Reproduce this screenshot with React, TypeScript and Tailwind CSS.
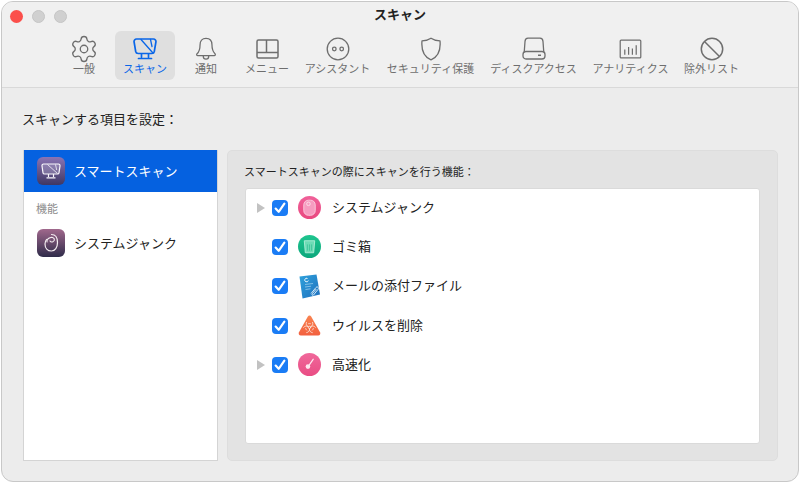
import React from "react";
import { Biohazard, Settings } from "lucide-react";

const FONT = "font-['Inter','Noto_Sans_CJK_JP',sans-serif]";

const Gear = () => <Settings size={30} strokeWidth={1.05} />;
const Monitor = () => (
  <svg width="24" height="22" viewBox="0 0 24 22" fill="none" stroke="currentColor" strokeWidth="1.7" strokeLinejoin="round" strokeLinecap="round">
    <path d="M3.500 1h17a2.500 2.500 0 0 1 2.400 3l-1.600 9.500a2.500 2.500 0 0 1-2.400 2H5.100a2.500 2.500 0 0 1-2.400-2L1.100 4a2.500 2.500 0 0 1 2.400-3z" />
    <path d="M8 1.500 19.500 14.500" strokeWidth="1.300" />
    <path d="M17.500 1.500l1.500 7" strokeWidth="1.300" />
    <path d="M8.500 16v3M15.500 16v3M5.500 20.500h13" />
  </svg>
);
const Bell = () => (
  <svg width="22" height="24" viewBox="0 0 24 26" fill="none" stroke="currentColor" strokeWidth="1.400" strokeLinejoin="round">
    <path d="M12 1.500c-4.200 0-6.500 3-6.500 7 0 5-1 7.500-3.300 9.700-.8.800-.3 2 .8 2h18c1.100 0 1.600-1.200.8-2-2.300-2.200-3.300-4.700-3.300-9.700 0-4-2.300-7-6.500-7z" />
    <path d="M9 20.500c0 2.200 1.300 3.500 3 3.500s3-1.300 3-3.500" />
  </svg>
);
const Menu = () => (
  <svg width="23" height="20" viewBox="0 0 23 20" fill="none" stroke="currentColor" strokeWidth="1.500">
    <rect x="1" y="1" width="21" height="18" rx="1.500" />
    <path d="M1 13.500h21M10.500 1v12.500" />
  </svg>
);
const Assistant = () => (
  <svg width="24" height="24" viewBox="0 0 24 24" fill="none" stroke="currentColor" strokeWidth="1.300">
    <circle cx="12" cy="12" r="10.800" />
    <circle cx="8.300" cy="12" r="1.800" />
    <circle cx="15.700" cy="12" r="1.800" />
  </svg>
);
const Shield = () => (
  <svg width="22" height="24" viewBox="0 0 22 24" fill="none" stroke="currentColor" strokeWidth="1.300" strokeLinejoin="round">
    <path d="M11 1.200c2.500 1.800 5.500 2.600 9 2.600.8 8.500-.8 15.600-9 19-8.200-3.400-9.800-10.500-9-19 3.500 0 6.500-.8 9-2.600z" />
  </svg>
);
const Disk = () => (
  <svg width="24" height="23" viewBox="0 0 24 23" fill="none" stroke="currentColor" strokeWidth="1.300">
    <path d="M2.200 15.500 3 4.500C3.100 2.600 4.200 1.200 6 1.200h12c1.800 0 2.900 1.400 3 3.300l.8 11" />
    <rect x="1" y="14.500" width="22" height="7.500" rx="3" />
    <path d="M16 18.300h3" strokeWidth="1.500" />
  </svg>
);
const Chart = () => (
  <svg width="23" height="20" viewBox="0 0 24 21" fill="none" stroke="currentColor" strokeWidth="1.300">
    <rect x="1.200" y="1.200" width="21.600" height="18.600" rx="1" />
    <path d="M6 11v5.500M10 8.500v8M14 10v6.500M18 6.500v10" />
  </svg>
);
const Ban = () => (
  <svg width="24" height="24" viewBox="0 0 24 24" fill="none" stroke="currentColor" strokeWidth="1.500">
    <circle cx="12" cy="12" r="10.700" />
    <path d="M4.500 4.500l15 15" />
  </svg>
);

const tabs = [
  { label: "一般", icon: <Gear />, cls: "w-[60px] text-[#6e6e6e]" },
  { label: "スキャン", icon: <Monitor />, cls: "w-[60px] ml-px bg-[#dfdfdf] text-[#0a66e8]" },
  { label: "通知", icon: <Bell />, cls: "w-[60px] ml-px text-[#6e6e6e]" },
  { label: "メニュー", icon: <Menu />, cls: "w-[60px] ml-px text-[#6e6e6e]" },
  { label: "アシスタント", icon: <Assistant />, cls: "w-[80px] ml-[0.5px] text-[#6e6e6e]" },
  { label: "セキュリティ保護", icon: <Shield />, cls: "w-[106px] text-[#6e6e6e]" },
  { label: "ディスクアクセス", icon: <Disk />, cls: "w-[100px] text-[#6e6e6e]" },
  { label: "アナリティクス", icon: <Chart />, cls: "w-[94px] text-[#6e6e6e]" },
  { label: "除外リスト", icon: <Ban />, cls: "w-[68px] text-[#6e6e6e]" },
];

const Check = () => (
  <span className="w-4 h-4 rounded-[4px] bg-[#1a7cf5] flex items-center justify-center shrink-0">
    <svg width="12" height="12" viewBox="0 0 11 11" fill="none" stroke="#fff" strokeWidth="2" strokeLinecap="round" strokeLinejoin="round">
      <path d="M1.500 6l2.800 3L9.500 1.500" />
    </svg>
  </span>
);

const JunkIcon = () => (
  <svg width="23" height="23" viewBox="0 0 22 22">
    <defs><linearGradient id="p1" x1="0" y1="0" x2="0" y2="1"><stop offset="0" stopColor="#f0619a" /><stop offset="1" stopColor="#e9487f" /></linearGradient></defs>
    <circle cx="11" cy="11" r="11" fill="url(#p1)" />
    <rect x="5.500" y="4" width="11" height="14.500" rx="4.500" fill="#f69cc0" stroke="#fbd3e2" strokeWidth="0.800" />
    <circle cx="10" cy="7.500" r="1.700" fill="none" stroke="#fde3ec" strokeWidth="0.800" />
  </svg>
);
const TrashIcon = () => (
  <svg width="23" height="23" viewBox="0 0 22 22">
    <defs><linearGradient id="g1" x1="0" y1="0" x2="0" y2="1"><stop offset="0" stopColor="#1fc58f" /><stop offset="1" stopColor="#0ba77c" /></linearGradient></defs>
    <circle cx="11" cy="11" r="11" fill="url(#g1)" />
    <path d="M6 5.500h10l-1 11.500H7z" fill="#6ddcb6" stroke="#b8f0dc" strokeWidth="0.800" strokeLinejoin="round" />
    <path d="M9 9v6M11 9v6M13 9v6" stroke="#2cb98f" strokeWidth="0.600" />
  </svg>
);
const MailIcon = () => (
  <svg width="22" height="25" viewBox="0 0 22 25">
    <defs><linearGradient id="b1" x1="0" y1="0" x2="1" y2="1"><stop offset="0" stopColor="#2fa2dc" /><stop offset="1" stopColor="#1f6fbd" /></linearGradient></defs>
    <path d="M0.500 2.500 17.500 0.500 21 20.500 3.500 24.500z" fill="url(#b1)" />
    <path d="M6 10.500l8-1M6 13l6-.8M6.500 15.500l5-.7" stroke="#a9d5f0" strokeWidth="0.700" />
    <path d="M8.500 4.500a1.800 1.800 0 1 0 .8 2" fill="none" stroke="#eaf6fc" strokeWidth="1" />
    <path d="M12 19.500l5-6c1.300-1.500 3.300.2 2.100 1.800l-4.600 5.700c-.9 1-2.100 0-1.200-1.200l4-4.800" fill="none" stroke="#e4f2fb" strokeWidth="0.900" />
  </svg>
);
const VirusIcon = () => (
  <svg width="23" height="21" viewBox="0 0 23 21">
    <defs><linearGradient id="o1" x1="0" y1="0" x2="0" y2="1"><stop offset="0" stopColor="#f98350" /><stop offset="1" stopColor="#f2603f" /></linearGradient></defs>
    <path d="M11.500 .5c.8 0 1.300.4 1.800 1.200l8.700 15.500c.8 1.500-.1 3.300-1.800 3.300H2.800c-1.700 0-2.600-1.800-1.800-3.300L9.700 1.700c.5-.8 1-1.200 1.800-1.200z" fill="url(#o1)" />
    <Biohazard x={4.500} y={5.500} width={14} height={14} stroke="#fde8de" strokeWidth={1.500} />
  </svg>
);
const SpeedIcon = () => (
  <svg width="23" height="23" viewBox="0 0 22 22">
    <defs><linearGradient id="p2" x1="0" y1="0" x2="0" y2="1"><stop offset="0" stopColor="#f0689b" /><stop offset="1" stopColor="#e94d84" /></linearGradient></defs>
    <circle cx="11" cy="11" r="11" fill="url(#p2)" />
    <circle cx="9.500" cy="13" r="2.200" fill="#fde6ef" />
    <path d="M10 12.500 14.500 6" stroke="#fde6ef" strokeWidth="1.200" strokeLinecap="round" />
  </svg>
);

const rows = [
  { label: "システムジャンク", icon: <JunkIcon />, arrow: true },
  { label: "ゴミ箱", icon: <TrashIcon />, arrow: false },
  { label: "メールの添付ファイル", icon: <MailIcon />, arrow: false },
  { label: "ウイルスを削除", icon: <VirusIcon />, arrow: false },
  { label: "高速化", icon: <SpeedIcon />, arrow: true },
];

const SmartTile = () => (
  <svg width="28" height="28" viewBox="0 0 28 28">
    <defs><linearGradient id="s1" x1="0" y1="0" x2="0" y2="1"><stop offset="0" stopColor="#8a74b4" /><stop offset="1" stopColor="#3f3763" /></linearGradient></defs>
    <rect width="28" height="28" rx="6" fill="url(#s1)" />
    <path d="M6.500 7h15a1.500 1.500 0 0 1 1.500 1.800l-1 7a1.500 1.500 0 0 1-1.500 1.200h-13a1.500 1.500 0 0 1-1.500-1.200l-1-7a1.500 1.500 0 0 1 1.500-1.800z" fill="#f2eff8" fillOpacity="0.2" stroke="#f7f5fb" strokeWidth="1.200" />
    <path d="M10.500 7.500 20.500 16.500M18.500 7.500l1.200 5.500" fill="none" stroke="#f7f5fb" strokeWidth="0.800" />
    <path d="M11.500 17v3M16.500 17v3M9.500 20.800h9" stroke="#f7f5fb" strokeWidth="1.200" />
  </svg>
);
const JunkTile = () => (
  <svg width="28" height="28" viewBox="0 0 28 28">
    <defs><linearGradient id="s2" x1="0" y1="0" x2="0" y2="1"><stop offset="0" stopColor="#a0688c" /><stop offset="1" stopColor="#2f2b4a" /></linearGradient></defs>
    <rect width="28" height="28" rx="6" fill="url(#s2)" />
    <path d="M14.500 5.500c4 0 6 3.500 6 8 0 5-2.500 8.500-6 8.500-4 0-6.500-3-6.500-7 0-2 .7-3.500 1.500-4.500" fill="none" stroke="#f5eef2" strokeWidth="1.200" strokeLinecap="round" />
    <path d="M10 13c-.7-4 6-6.500 7.300-3 .7 2.500-3 4-4.300 2" fill="none" stroke="#f5eef2" strokeWidth="1.100" strokeLinecap="round" />
  </svg>
);

export default function App() {
  return (
    <div className={`w-[800px] h-[483px] bg-white ${FONT} overflow-hidden pt-px pl-px`}>
      <div className="w-[798px] h-[481px] rounded-[12px] border border-[#c8c8c8] bg-[#ececec] flex flex-col overflow-hidden">
        <header className="h-[86px] shrink-0 bg-[#f0f0f0] border-b border-[#d9d9d9] flex flex-col">
          <div className="relative h-[28px] shrink-0 flex items-center justify-center">
            <div className="absolute left-[8px] top-[8px] flex gap-[9px]">
              <span className="w-[13px] h-[13px] rounded-full bg-[#fb4f4b]" />
              <span className="w-[13px] h-[13px] rounded-full bg-[#d0d0d0] border border-[#c4c4c4]" />
              <span className="w-[13px] h-[13px] rounded-full bg-[#d0d0d0] border border-[#c4c4c4]" />
            </div>
            <span className="text-[13px] font-bold text-[#222] mt-[-2px]">スキャン</span>
          </div>
          <nav className="flex pl-[52px] h-[50px] mt-px">
            {tabs.map((t) => (
              <div key={t.label} className={`h-[49px] rounded-[6px] flex flex-col items-center ${t.cls}`}>
                <div className="h-[30px] flex items-center justify-center pt-[5px]">{t.icon}</div>
                <span className="text-[11px] leading-[14px] mt-px whitespace-nowrap">{t.label}</span>
              </div>
            ))}
          </nav>
        </header>

        <main className="flex-1 flex flex-col pl-[21px] pr-[20px]">
          <h2 className="h-[62px] shrink-0 flex items-center text-[13px] font-normal text-[#222] pt-px -ml-px">スキャンする項目を設定：</h2>
          <div className="flex gap-[9px] h-[311px]">
            <aside className="w-[195px] bg-white border border-[#d4d4d4] flex flex-col">
              <div className="h-[42px] bg-[#0561e0] flex items-center pl-[13px] gap-[9px] text-white text-[13px] shrink-0 mt-[-1px]">
                <SmartTile />
                <span className="pt-[2px]">スマートスキャン</span>
              </div>
              <div className="text-[11px] text-[#8c8c8c] pl-[12px] mt-[10px] leading-[14px]">機能</div>
              <div className="flex items-center pl-[13px] gap-[9px] text-[13px] text-[#222] mt-[13px]">
                <JunkTile />
                <span className="pt-[2px]">システムジャンク</span>
              </div>
            </aside>
            <section className="flex-1 rounded-[5px] bg-[#e3e3e3] border border-[#dddddd] px-[17px] pb-[16px] flex flex-col">
              <div className="h-[37px] shrink-0 flex items-center text-[11px] text-[#222] pt-[5px] -ml-px">スマートスキャンの際にスキャンを行う機能：</div>
              <div className="flex-1 bg-white rounded-[3px] border border-[#dadada] flex flex-col">
                <div className="-mt-px flex flex-col">
                  {rows.map((r) => (
                    <div key={r.label} className="h-[39.300px] flex items-center shrink-0">
                      <div className="w-[26px] shrink-0 flex justify-end pr-[7px] pl-[11px]">
                        {r.arrow && <span className="w-0 h-0 border-y-[5px] border-y-transparent border-l-[8px] border-l-[#c2c2c2]" />}
                      </div>
                      <Check />
                      <div className="w-[23px] ml-[10px] flex justify-center shrink-0">{r.icon}</div>
                      <span className="ml-[11px] text-[13px] text-[#222]">{r.label}</span>
                    </div>
                  ))}
                </div>
              </div>
            </section>
          </div>
        </main>
      </div>
    </div>
  );
}
